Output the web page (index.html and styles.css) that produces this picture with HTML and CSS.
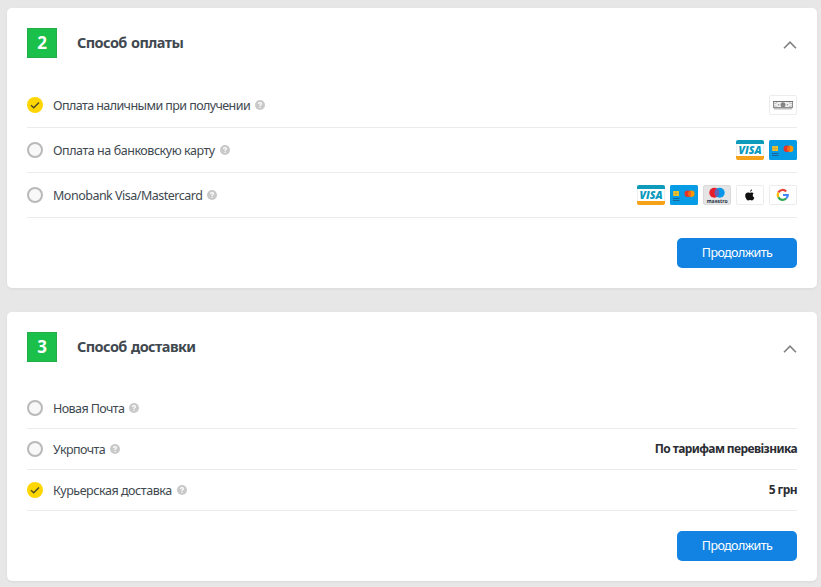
FILE: index.html
```html
<!DOCTYPE html>
<html lang="ru">
<head>
    <meta charset="UTF-8">
    <meta name="viewport" content="width=device-width, initial-scale=1.0">
    <title>Оформление заказа</title>
    <link rel="stylesheet" href="styles.css">
</head>
<body>

    <!-- Shared icons -->
    <svg class="sprite" width="0" height="0">
        <symbol id="mastercard" viewBox="0 0 28 20">
            <rect width="28" height="20" rx="1.5" fill="#069be5"/>
            <rect x="3.2" y="6" width="5.8" height="5" fill="#edc42c"/>
            <path d="M3.2 8.5h5.8M6.1 6v5" stroke="#c79b35" stroke-width=".5"/>
            <path d="M3 13.5h6.5M3 15.5h6.5" stroke="#19659b"/>
            <circle cx="21.2" cy="8.8" r="3.3" fill="#ff9800"/>
            <circle cx="17.8" cy="8.8" r="3.3" fill="#e53528"/>
            <path d="M19.5 6a3.3 3.3 0 0 1 0 5.6a3.3 3.3 0 0 1 0-5.6z" fill="#f46b18"/>
        </symbol>
        <symbol id="help" viewBox="0 0 10 10">
            <circle cx="5" cy="5" r="5" fill="#c9c9c9"/>
            <path d="M3.5 4q0-1.4 1.5-1.4T6.5 3.8Q6.5 4.6 5 5.2v.7" fill="none" stroke="#fff" stroke-width="1.2"/>
            <rect x="4.4" y="6.7" width="1.2" height="1.2" fill="#fff"/>
        </symbol>
        <symbol id="check" viewBox="0 0 16 16">
            <circle cx="8" cy="8" r="8" fill="#ffd600"/>
            <path d="M4 8.3L6.7 10.8L12 5.4" fill="none" stroke="#4d4a2a" stroke-width="1.4"/>
        </symbol>
        <symbol id="arrow" viewBox="0 0 14 8">
            <path d="M1 7.2L7 1.2L13 7.2" fill="none" stroke="#808080" stroke-width="1.6"/>
        </symbol>
    </svg>

    <!-- Payment -->
    <section class="card payment">
        <div class="card-header">
            <span class="step">2</span>
            <h2>Способ оплаты</h2>
            <svg class="arrow"><use href="#arrow"/></svg>
        </div>
        <div class="options">
            <div class="option">
                <svg class="check"><use href="#check"/></svg>
                <span class="label label-tight">Оплата наличными при получении</span>
                <svg class="help"><use href="#help"/></svg>
                <div class="icons">
                    <svg class="pay-icon bordered" viewBox="0 0 28 20">
                        <rect x="5" y="12" width="18" height="2.5" fill="#bdbdbd"/>
                        <rect x="4.5" y="6.5" width="19" height="6" fill="#f0f0f0" stroke="#8d8d8d"/>
                        <path d="M4 6.5h20" stroke="#747474"/>
                        <path d="M8 7Q8 8.7 5 8.7M20 7Q20 8.7 23 8.7M8 12.5Q8 10.8 5 10.8M20 12.5Q20 10.8 23 10.8" fill="none" stroke="#aaa" stroke-width=".7"/>
                        <circle cx="14" cy="9.8" r="2.5" fill="#858585"/>
                        <circle cx="9.5" cy="9.8" r=".8" fill="#999"/>
                        <circle cx="18.5" cy="9.8" r=".8" fill="#999"/>
                    </svg>
                </div>
            </div>
            <div class="option">
                <span class="radio"></span>
                <span class="label">Оплата на банковскую карту</span>
                <svg class="help"><use href="#help"/></svg>
                <div class="icons">
                    <span class="pay-icon visa">VISA</span>
                    <svg class="pay-icon"><use href="#mastercard"/></svg>
                </div>
            </div>
            <div class="option">
                <span class="radio"></span>
                <span class="label label-latin">Monobank Visa/Mastercard</span>
                <svg class="help"><use href="#help"/></svg>
                <div class="icons">
                    <span class="pay-icon visa">VISA</span>
                    <svg class="pay-icon"><use href="#mastercard"/></svg>
                    <svg class="pay-icon" viewBox="0 0 28 20">
                        <rect x=".5" y=".5" width="27" height="19" rx="1.5" fill="#e5e5e5" stroke="#dadada"/>
                        <circle cx="11.3" cy="7.8" r="5" fill="#e91e2d"/>
                        <circle cx="16.7" cy="7.8" r="5" fill="#0797e8"/>
                        <path d="M14 3.6a5 5 0 0 1 0 8.4a5 5 0 0 1 0-8.4z" fill="#6564b7"/>
                        <text class="maestro" x="3.7" y="17.5" textLength="21" lengthAdjust="spacingAndGlyphs">maestro</text>
                    </svg>
                    <svg class="pay-icon bordered" viewBox="0 0 28 20">
                        <path d="M14.2 6.9Q14 5 16.1 4.2Q16.2 6.1 14.2 6.9zM17.6 8.3Q16.6 7 15 7.6Q13.9 8 12.7 7.5Q10.3 7 9.3 9.2Q8.5 12 10.8 14.8Q11.7 15.9 12.8 15.3Q14 14.7 15.2 15.3Q16.3 15.8 17.2 14.7Q18.1 13.5 18.3 12.7Q15.5 11 17.6 8.3z" fill="#111"/>
                    </svg>
                    <svg class="pay-icon bordered" viewBox="0 0 28 20">
                        <g fill="none" stroke-width="2.2">
                            <path d="M9.3 7.6A4.9 4.9 0 0 1 17.2 6.5" stroke="#ea4335"/>
                            <path d="M9.3 12.2A4.9 4.9 0 0 1 9.3 7.6" stroke="#fbbc05"/>
                            <path d="M17.1 13.5A4.9 4.9 0 0 1 9.3 12.2" stroke="#34a853"/>
                            <path d="M14 10h4.8Q18.8 12.2 17.1 13.5" stroke="#4285f4"/>
                        </g>
                    </svg>
                </div>
            </div>
        </div>
        <button class="btn">Продолжить</button>
    </section>

    <!-- Delivery -->
    <section class="card delivery">
        <div class="card-header">
            <span class="step">3</span>
            <h2>Способ доставки</h2>
            <svg class="arrow"><use href="#arrow"/></svg>
        </div>
        <div class="options">
            <div class="option">
                <span class="radio"></span>
                <span class="label label-tight">Новая Почта</span>
                <svg class="help"><use href="#help"/></svg>
            </div>
            <div class="option">
                <span class="radio"></span>
                <span class="label label-tight">Укрпочта</span>
                <svg class="help"><use href="#help"/></svg>
                <span class="price">По тарифам перевізника</span>
            </div>
            <div class="option">
                <svg class="check"><use href="#check"/></svg>
                <span class="label">Курьерская доставка</span>
                <svg class="help"><use href="#help"/></svg>
                <span class="price">5 грн</span>
            </div>
        </div>
        <button class="btn">Продолжить</button>
    </section>

</body>
</html>
```
FILE: styles.css
```css
* {
    box-sizing: border-box;
}

body {
    margin: 0;
    padding: 8px 4px 6px 7px;
    background: #e7e7e7;
    color: #414950;
    font-family: "Noto Sans", sans-serif;
    font-size: 12.5px;
}

svg {
    display: block;
    flex-shrink: 0;
}

.sprite {
    position: absolute;
}

/* Cards */
.card {
    padding: 20px;
    background: #fff;
    border-radius: 5px;
    box-shadow: 0 1px 3px rgba(0, 0, 0, 0.06);
}

.payment {
    height: 280px;
}

.delivery {
    height: 269px;
    margin-top: 24px;
}

.card-header {
    display: flex;
    align-items: center;
    height: 30px;
}

.step {
    width: 30px;
    height: 30px;
    border: 1px solid #22ad47;
    background: #1bc04a;
    color: #fff;
    font-size: 17px;
    font-weight: 700;
    line-height: 27px;
    text-align: center;
}

h2 {
    height: 30px;
    margin: 0 0 0 20px;
    color: #414950;
    font-size: 14.5px;
    font-weight: 700;
    letter-spacing: -0.58px;
    word-spacing: 1px;
    line-height: 28px;
}

.arrow {
    width: 14px;
    height: 8px;
    margin: 4px 0 0 auto;
}

/* Options */
.options {
    margin-top: 25px;
}

.delivery .options {
    margin-top: 26px;
}

.option {
    display: flex;
    align-items: center;
    height: 45px;
    border-bottom: 1px solid #ebebeb;
}

.delivery .option {
    height: 41px;
}

.radio,
.check {
    flex-shrink: 0;
    width: 16px;
    height: 16px;
}

.radio {
    border: 2px solid #b9b9b9;
    border-radius: 50%;
    background: #f8f8f8;
}

.label {
    margin-left: 10px;
    letter-spacing: -0.45px;
    white-space: nowrap;
}

.label-latin {
    letter-spacing: -0.5px;
}

.label-tight {
    letter-spacing: -0.58px;
}

.help {
    width: 10px;
    height: 10px;
    margin-left: 5px;
}

.icons {
    display: flex;
    gap: 5px;
    margin-left: auto;
}

.pay-icon {
    width: 28px;
    height: 20px;
}

.visa {
    border-top: 4px solid #0d9abb;
    border-bottom: 4px solid #f5a11a;
    border-radius: 2px;
    background: #fff;
    box-shadow: inset 1px 0 #eee, inset -1px 0 #eee;
    color: #0799bd;
    font-family: "Open Sans", sans-serif;
    font-size: 10.5px;
    font-style: italic;
    font-weight: 800;
    line-height: 12px;
    text-align: center;
}

.maestro {
    fill: #263247;
    font-family: "Open Sans", sans-serif;
    font-size: 5.8px;
    font-weight: 700;
}

.bordered {
    border-radius: 2px;
    box-shadow: inset 0 0 0 1px #ececec;
}

.price {
    margin-left: auto;
    padding-bottom: 2px;
    color: #2b2d33;
    font-size: 12px;
    font-weight: 700;
    letter-spacing: -0.6px;
}

.btn {
    display: block;
    width: 120px;
    height: 30px;
    margin: 20px 0 0 auto;
    padding: 0 0 1px;
    border: none;
    border-radius: 5px;
    background: #1283e2;
    color: #fff;
    font-family: inherit;
    font-size: 12.5px;
    letter-spacing: -0.6px;
    line-height: 28px;
}
```
